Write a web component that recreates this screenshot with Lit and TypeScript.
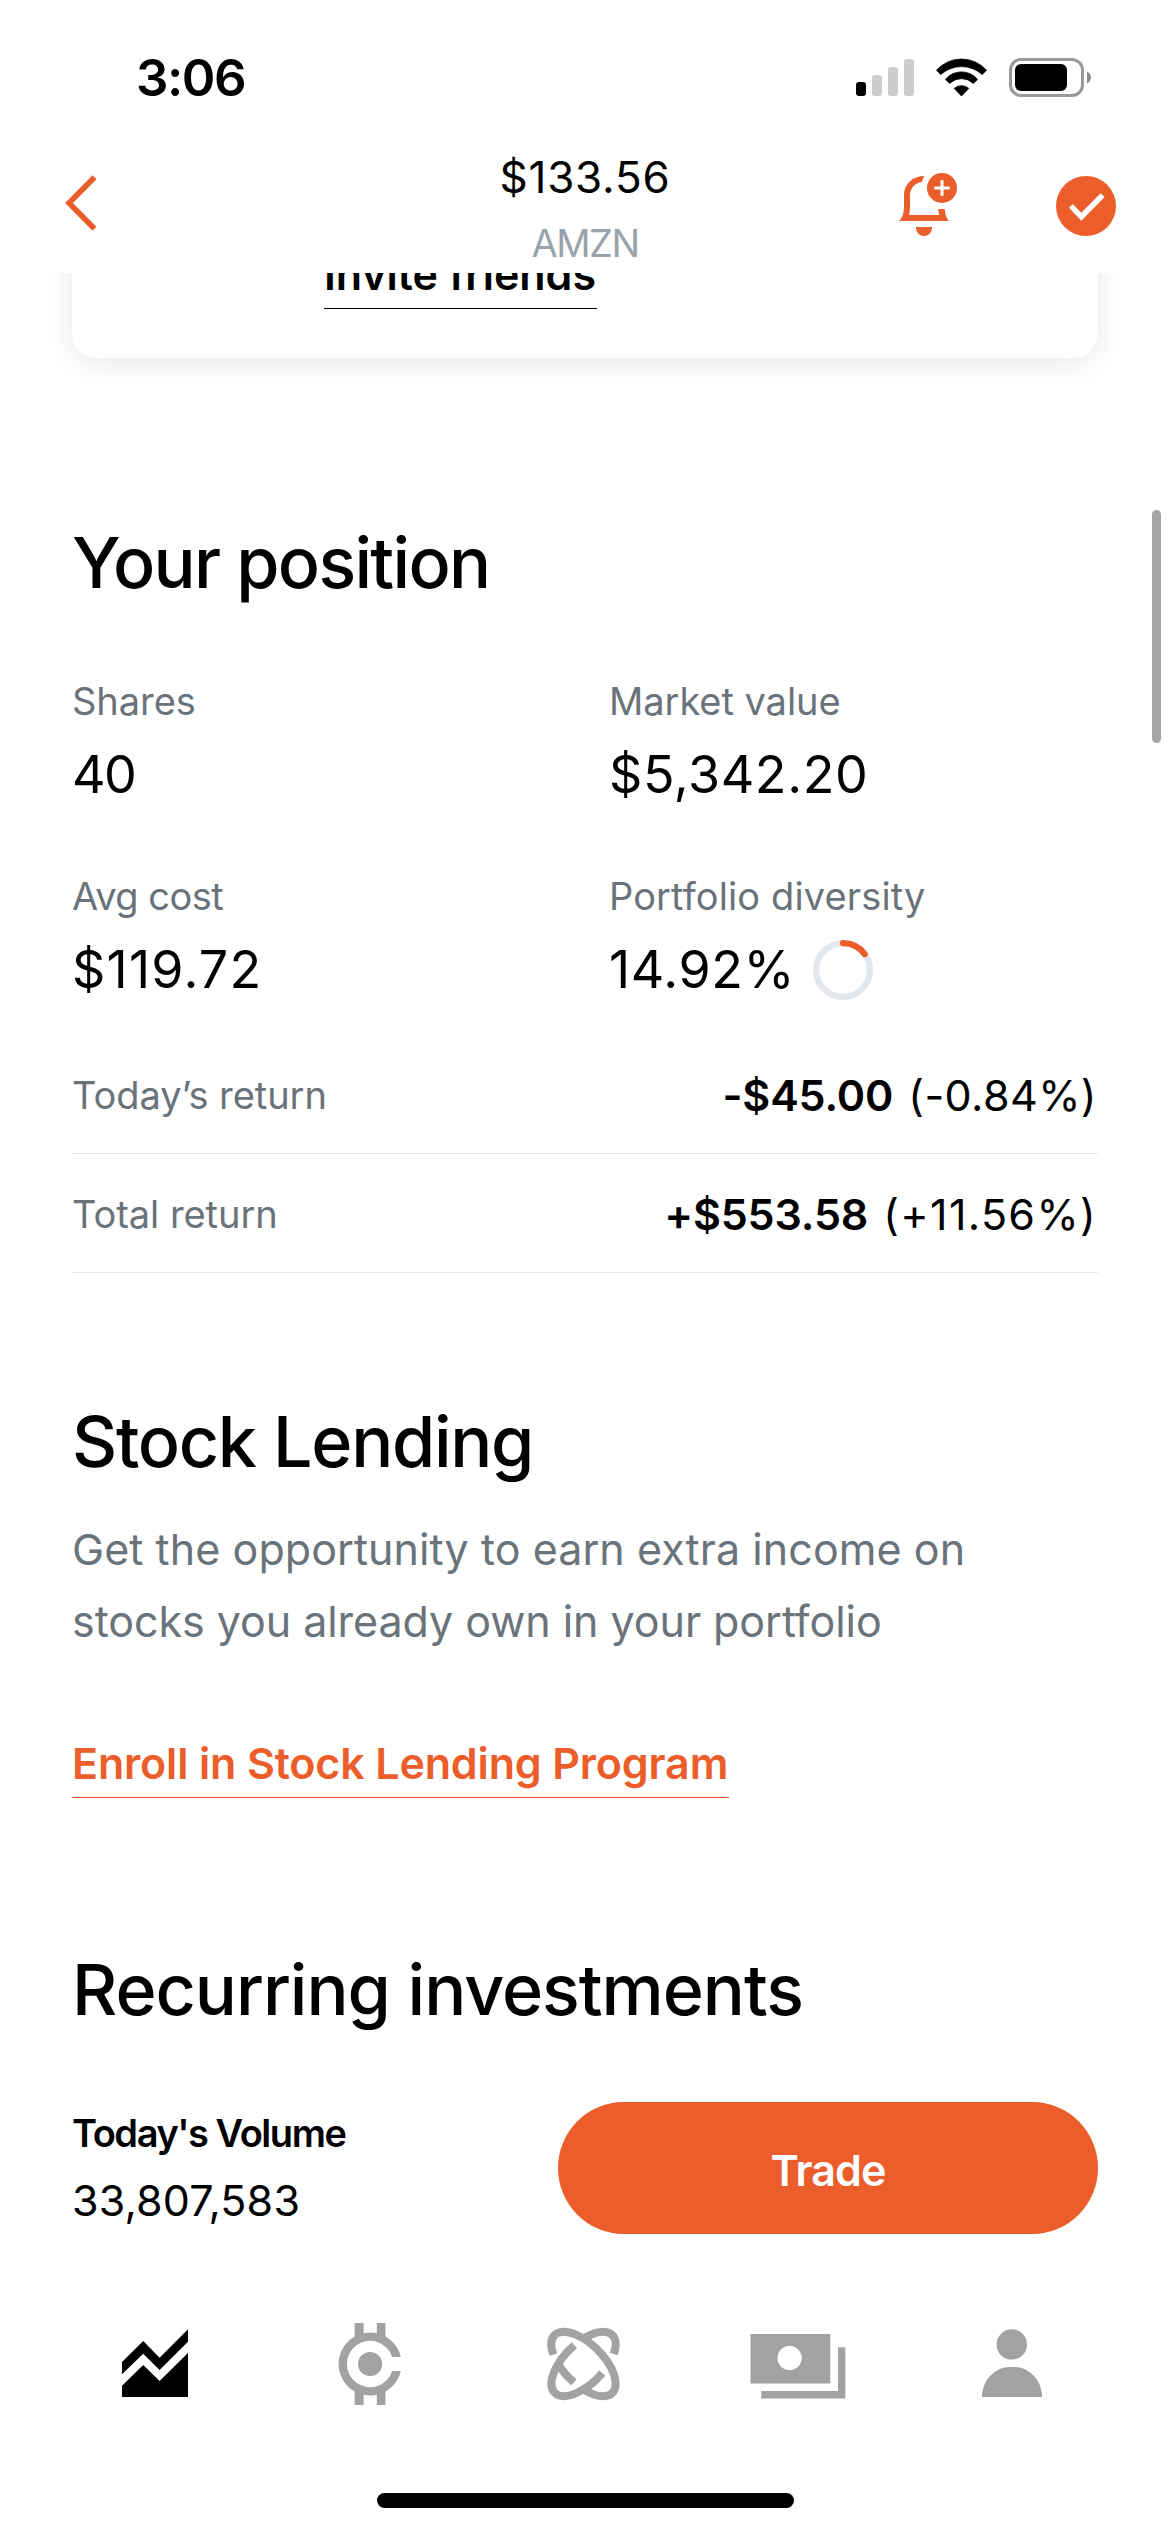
import { LitElement, html, css, svg } from "lit";
import { customElement, property } from "lit/decorators.js";

const ACCENT = css`#eb5d2a`;

@customElement("status-bar")
class StatusBar extends LitElement {
  static styles = css`
    :host { display: flex; justify-content: space-between; height: 120px; padding: 47px 78px 0 136px; box-sizing: border-box; }
    .time { font-size: 51px; font-weight: 600; line-height: 61px; letter-spacing: -1.45px; }
    .icons { display: block; width: 236px; height: 40px; margin-top: 11px; }
  `;
  render() {
    return html`
      <span class="time">3:06</span>
      <svg class="icons" viewBox="0 0 236 40">
        <rect x="0" y="24" width="10" height="14" rx="3" />
        <g fill="#ccc">
          <rect x="16" y="17" width="10" height="21" rx="3" />
          <rect x="32" y="9" width="10" height="29" rx="3" />
          <rect x="48" y="1" width="10" height="37" rx="3" />
        </g>
        <path d="M80.5 12.2A33.5 33.5 0 0 1 130.5 12.2L126.3 16.6A31 31 0 0 0 84.7 16.6Z" stroke="#000" stroke-width="0.8" stroke-linejoin="round" />
        <path d="M89.4 21.4A21 21 0 0 1 121.6 21.4L117.3 25.4A17 17 0 0 0 93.7 25.4Z" stroke="#000" stroke-width="0.8" stroke-linejoin="round" />
        <path d="M98.2 30.4A11 11 0 0 1 112.8 30.4L105.5 38Z" stroke="#000" stroke-width="0.8" stroke-linejoin="round" />
        <rect x="154.5" y="1.5" width="72" height="36" rx="10.5" fill="none" stroke="#999" stroke-width="3" />
        <rect x="159" y="6" width="52" height="27" rx="6" />
        <path d="M231 13.5C236.3 16 236.3 23 231 25.5Z" fill="#8c8c8c" />
      </svg>
    `;
  }
}

@customElement("nav-header")
class NavHeader extends LitElement {
  static styles = css`
    :host { display: grid; grid-template-columns: 1fr auto 1fr; height: 153px; padding: 0 54px 0 65px; box-sizing: border-box; }
    svg { display: block; }
    .back { width: 32px; height: 56px; margin-top: 55px; }
    .title { display: flex; flex-direction: column; align-items: center; padding-top: 29px; margin-left: -11px; }
    .price { font-size: 44px; line-height: 56px; letter-spacing: 0.78px; }
    .ticker { font-size: 38px; line-height: 48px; margin-top: 14px; letter-spacing: -1.5px; color: #98a3ab; }
    .actions { display: flex; justify-content: flex-end; gap: 98px; padding-top: 52px; }
    .bell { width: 60px; height: 66px; }
    .check { width: 60px; height: 60px; margin-top: 4px; }
    .accent { fill: ${ACCENT}; }
    .accent-line { fill: none; stroke: ${ACCENT}; stroke-width: 5.6; }
  `;
  render() {
    return html`
      <svg class="back" viewBox="0 0 32 56"><path class="accent-line" d="M29.5 2.3L4 28L29.5 53.7" /></svg>
      <div class="title">
        <span class="price">$133.56</span>
        <span class="ticker">AMZN</span>
      </div>
      <div class="actions">
        <svg class="bell" viewBox="24 21 180 198">
          <path class="accent" d="M27 168C38 158 42 142 42 122V90C42 57 68 33 103 33L95 51C75 54 60 69 60 92V124Q60 138 57.500 150H147.500L144.500 132H164C165 147 169 160 177 168Z" />
          <path class="accent" d="M78 186H126V189A24 24 0 0 1 78 189Z" />
          <circle class="accent" cx="156" cy="69" r="45" />
          <path d="M133 69H179M156 46V92" stroke="#fff" stroke-width="9" />
        </svg>
        <svg class="check" viewBox="498 33 180 180">
          <circle class="accent" cx="588" cy="123" r="90" />
          <path fill="#fff" d="M548 117L574 143L632 85L644 96L574 167L537 128Z" />
        </svg>
      </div>
    `;
  }
}

@customElement("diversity-ring")
class DiversityRing extends LitElement {
  @property({ type: Number }) percent = 0;
  static styles = css`
    :host { display: block; }
    svg { display: block; width: 60px; height: 60px; }
    .track { fill: none; stroke: #e4e8ed; stroke-width: 6.2; }
    .part { fill: none; stroke: ${ACCENT}; stroke-width: 6.2; stroke-linecap: round; }
  `;
  render() {
    return html`
      <svg viewBox="0 0 60 60">
        <circle class="track" cx="30" cy="30" r="26.900" />
        <circle class="part" cx="30" cy="30" r="26.900" pathLength="100"
          stroke-dasharray="${this.percent} 100" transform="rotate(-90 30 30)" />
      </svg>
    `;
  }
}

const TABS = [
  { name: "invest", active: true, art: svg`
      <path d="M15 46L36.200 25L52.600 41.700L81 13.300V25.700L52.600 54L36.200 37.700L15 58.300Z" />
      <path d="M15 69.700L36.200 49L52.600 65L81 37V81H15Z" />` },
  { name: "crypto", active: false, art: svg`
      <path d="M79.800 41A31.500 31.500 0 1 0 79.800 55H71.200A23.200 23.200 0 1 1 71.200 41Z" />
      <circle cx="49.100" cy="48" r="12.100" />
      <path d="M33.700 7H42.600V21H33.700ZM55.800 7H64.500V21H55.800ZM33.700 75H42.600V89H33.700ZM55.800 75H64.500V89H55.800Z" />` },
  { name: "discover", active: false, art: svg`
      <g transform="translate(48.500 48) scale(0.33333)" fill="none" stroke="currentColor" stroke-width="24">
        <g transform="rotate(45)">
          <path d="M-83.400 44A122.600 60 0 1 1 52 54.300" />
          <path d="M-52 54.300A122.600 60 0 0 0 18.400 59.300" />
        </g>
        <g transform="rotate(-45)">
          <path d="M20.500 -59.200A122.600 60 0 1 0 20.500 59.200" />
          <path d="M85.500 43A122.600 60 0 0 0 60 -52.300" />
        </g>
      </g>` },
  { name: "banking", active: false, art: svg`
      <path fill-rule="evenodd" d="M0.500 18H80.300V67.400H0.500ZM39.600 29.800A12.200 12.200 0 1 0 39.601 29.800Z" />
      <path d="M88 31.300H95.300V82.400H11.300V75H88Z" />` },
  { name: "profile", active: false, art: svg`
      <circle cx="47.800" cy="28.400" r="15.200" />
      <path d="M18 81C18 64 31 51 46 51H50C65 51 78 64 78 81Z" />` },
];

@customElement("tab-bar")
class TabBar extends LitElement {
  static styles = css`
    :host { display: block; height: 252px; }
    .tabs { display: grid; grid-template-columns: repeat(5, 214.2px); justify-items: center; padding: 36px 0 0 48px; }
    .tab { display: block; width: 96px; height: 96px; color: #a2a2a2; fill: currentColor; }
    .active { color: #000; }
    .home { width: 417px; height: 15px; border-radius: 8px; background: #000; margin: 81px auto 0; }
  `;
  render() {
    return html`
      <div class="tabs">
        ${TABS.map((t) => html`<svg class="tab ${t.active ? "active" : ""}" viewBox="0 0 96 96">${t.art}</svg>`)}
      </div>
      <div class="home"></div>
    `;
  }
}

@customElement("app-root")
class AppRoot extends LitElement {
  static styles = css`
    :host {
      display: flex; flex-direction: column; position: relative;
      width: 1170px; height: 2532px; overflow: hidden; background: #fff; color: #000;
      font-family: Inter, "Liberation Sans", sans-serif; white-space: nowrap;
    }
    .scroll { height: 1787px; overflow: hidden; padding: 0 72px; }
    .card {
      margin-top: -60px; height: 145px; box-sizing: border-box; padding: 35px 0 0 252px;
      border-radius: 24px; background: #fff; box-shadow: 0 6px 30px rgba(0, 0, 0, 0.09);
    }
    .link { display: block; height: 60px; font-size: 43px; font-weight: 600; line-height: 52px; letter-spacing: -0.15px; border-bottom: 1px solid currentColor; }
    .invite { width: 273px; letter-spacing: -0.05px; }
    .enroll { width: 657px; margin-top: 80px; color: ${ACCENT}; }
    h2 { margin: 0; font-size: 70px; font-weight: 450; line-height: 84px; }
    .h-position { margin-top: 163px; letter-spacing: -1.7px; }
    .h-lending { margin-top: 127px; letter-spacing: -1.3px; }
    .h-recurring { margin-top: 150px; letter-spacing: -1.02px; }
    .stats { display: grid; grid-template-columns: 537px 1fr; row-gap: 65px; margin-top: 72px; }
    .stat { display: flex; flex-direction: column; gap: 18px; }
    .label { font-size: 38px; line-height: 48px; color: #6a737a; letter-spacing: -0.05px; }
    .label.tight { letter-spacing: -0.5px; }
    .label.loose { letter-spacing: 0.12px; }
    .value { display: flex; align-items: center; gap: 18px; font-size: 52px; line-height: 64px; letter-spacing: 0.6px; }
    .value.tight { letter-spacing: -1.6px; }
    .value.wide { letter-spacing: 1.2px; }
    .returns { margin-top: 33px; }
    .row { display: flex; justify-content: space-between; align-items: center; height: 119px; padding-top: 2px; box-sizing: border-box; border-bottom: 1px solid #e4e6e8; }
    .amount { display: flex; gap: 15px; font-size: 43px; line-height: 56px; padding-right: 1px; }
    .amount strong { font-weight: 600; letter-spacing: -0.15px; }
    .pct { letter-spacing: 0.44px; }
    .pct.wide { letter-spacing: 1.35px; }
    .copy { margin: 28.5px 0 0; font-size: 43px; line-height: 72.3px; color: #6a737a; letter-spacing: 0.07px; }
    .copy-end { letter-spacing: -0.05px; }
    .dock { display: flex; justify-content: space-between; height: 220px; padding: 42px 72px 0; box-sizing: border-box; background: #fff; }
    .volume { display: flex; flex-direction: column; padding-top: 7px; gap: 15px; }
    .volume-label { font-size: 38px; font-weight: 600; line-height: 48px; letter-spacing: -1.44px; }
    .volume-value { font-size: 43px; line-height: 56px; letter-spacing: 0.16px; }
    .trade {
      width: 540px; height: 132px; padding: 3px 0 0; box-sizing: border-box; border: 0; border-radius: 66px;
      background: ${ACCENT}; color: #fff; font: 600 43px/56px Inter, "Liberation Sans", sans-serif; letter-spacing: -0.89px;
    }
    .thumb { position: absolute; left: 1152px; top: 510px; width: 9px; height: 233px; border-radius: 5px; background: #a5a5a5; }
  `;
  render() {
    return html`
      <status-bar></status-bar>
      <nav-header></nav-header>
      <main class="scroll">
        <div class="card"><span class="link invite">Invite friends</span></div>
        <h2 class="h-position">Your position</h2>
        <div class="stats">
          <div class="stat"><span class="label">Shares</span><span class="value tight">40</span></div>
          <div class="stat"><span class="label">Market value</span><span class="value">$5,342.20</span></div>
          <div class="stat"><span class="label tight">Avg cost</span><span class="value wide">$119.72</span></div>
          <div class="stat">
            <span class="label loose">Portfolio diversity</span>
            <span class="value">14.92% <diversity-ring .percent=${14.92}></diversity-ring></span>
          </div>
        </div>
        <div class="returns">
          <div class="row">
            <span class="label">Today’s return</span>
            <span class="amount"><strong>-$45.00</strong><span class="pct">(-0.84%)</span></span>
          </div>
          <div class="row">
            <span class="label">Total return</span>
            <span class="amount"><strong>+$553.58</strong><span class="pct wide">(+11.56%)</span></span>
          </div>
        </div>
        <h2 class="h-lending">Stock Lending</h2>
        <p class="copy">Get the opportunity to earn extra income on<br /><span class="copy-end">stocks you already own in your portfolio</span></p>
        <span class="link enroll">Enroll in Stock Lending Program</span>
        <h2 class="h-recurring">Recurring investments</h2>
      </main>
      <div class="dock">
        <div class="volume">
          <span class="volume-label">Today's Volume</span>
          <span class="volume-value">33,807,583</span>
        </div>
        <button class="trade">Trade</button>
      </div>
      <tab-bar></tab-bar>
      <div class="thumb"></div>
    `;
  }
}
